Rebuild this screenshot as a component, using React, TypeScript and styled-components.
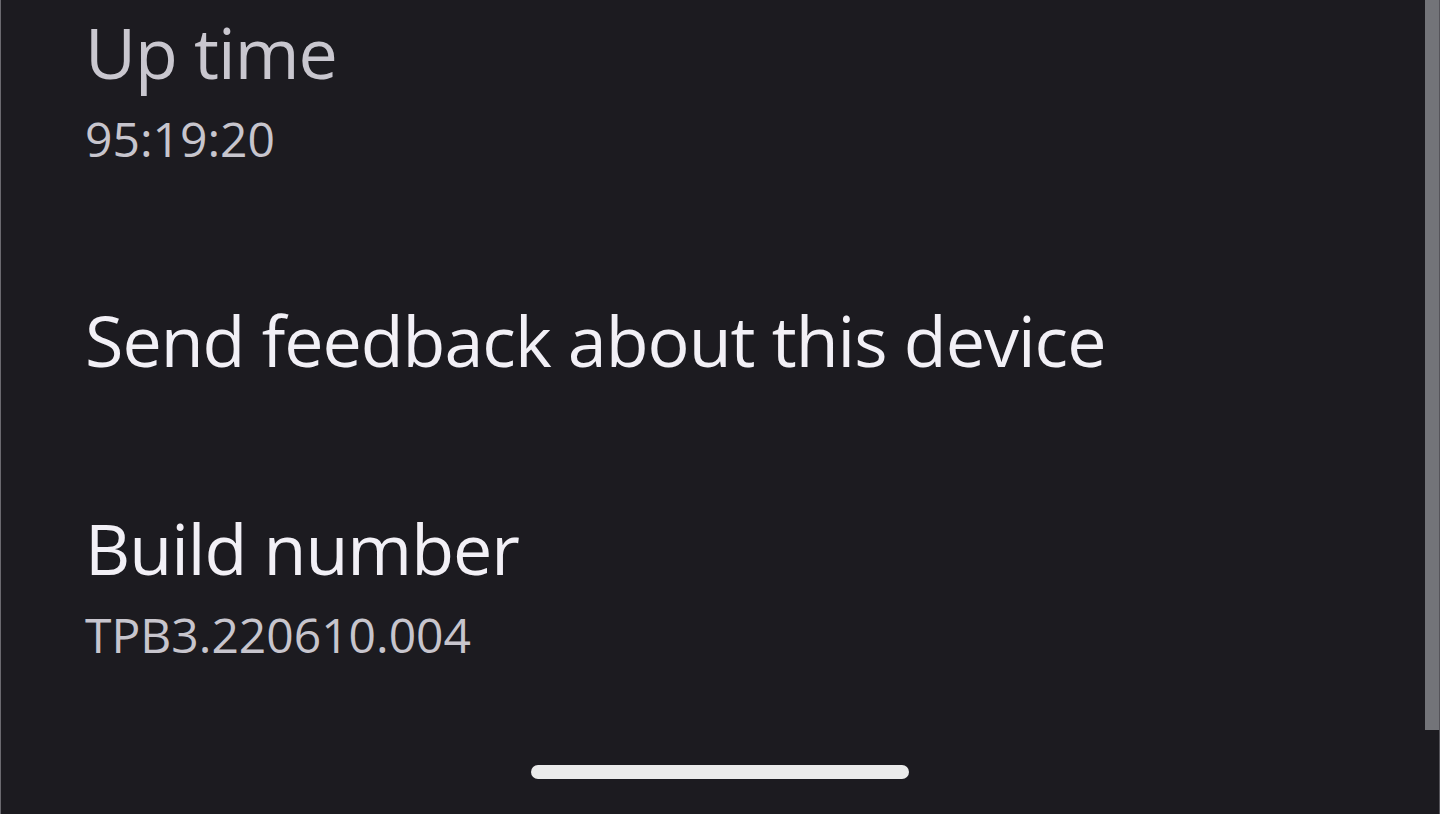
import styled, { createGlobalStyle } from "styled-components";

const GlobalStyle = createGlobalStyle`
  html, body {
    margin: 0;
    padding: 0;
    background: #1c1b20;
  }
  * {
    box-sizing: border-box;
  }
`;

type ItemType = {
  title: string;
  summary?: string;
  dim?: boolean;
};

const items: ItemType[] = [
  { title: "Up time", summary: "95:19:20", dim: true },
  { title: "Send feedback about this device" },
  { title: "Build number", summary: "TPB3.220610.004" },
];

export default function App() {
  return (
    <>
      <GlobalStyle />
      <Screen>
        <List>
          {items.map((item) => (
            <Row key={item.title}>
              <Title $dim={item.dim}>{item.title}</Title>
              {item.summary && <Summary>{item.summary}</Summary>}
            </Row>
          ))}
        </List>
        <ScrollThumb />
        <HomeIndicator />
      </Screen>
    </>
  );
}

const Screen = styled.div`
  position: relative;
  width: 1440px;
  height: 814px;
  overflow: hidden;
  background: #1c1b20;
  border-left: 1px solid #6a696f;
  border-right: 1px solid #55545a;
  font-family: "Open Sans", "Liberation Sans", sans-serif;
`;

const List = styled.div`
  display: flex;
  flex-direction: column;
  margin-top: -52px;
  padding-left: 84px;
`;

const Row = styled.div`
  display: flex;
  flex-direction: column;
  padding: 64px 0;
`;

const Title = styled.div<{ $dim?: boolean }>`
  font-size: 70px;
  line-height: 80px;
  letter-spacing: -1px;
  color: ${(p) => (p.$dim ? "#c9c7cf" : "#f2f0f6")};
  white-space: nowrap;
`;

const Summary = styled.div`
  margin-top: 14px;
  font-size: 48px;
  line-height: 66px;
  color: #c7c5cd;
  white-space: nowrap;
`;

const ScrollThumb = styled.div`
  position: absolute;
  top: 0;
  right: 0;
  width: 14px;
  height: 730px;
  background: #737479;
`;

const HomeIndicator = styled.div`
  position: absolute;
  left: 530px;
  bottom: 35px;
  width: 378px;
  height: 14px;
  border-radius: 7px;
  background: #ebebeb;
`;
